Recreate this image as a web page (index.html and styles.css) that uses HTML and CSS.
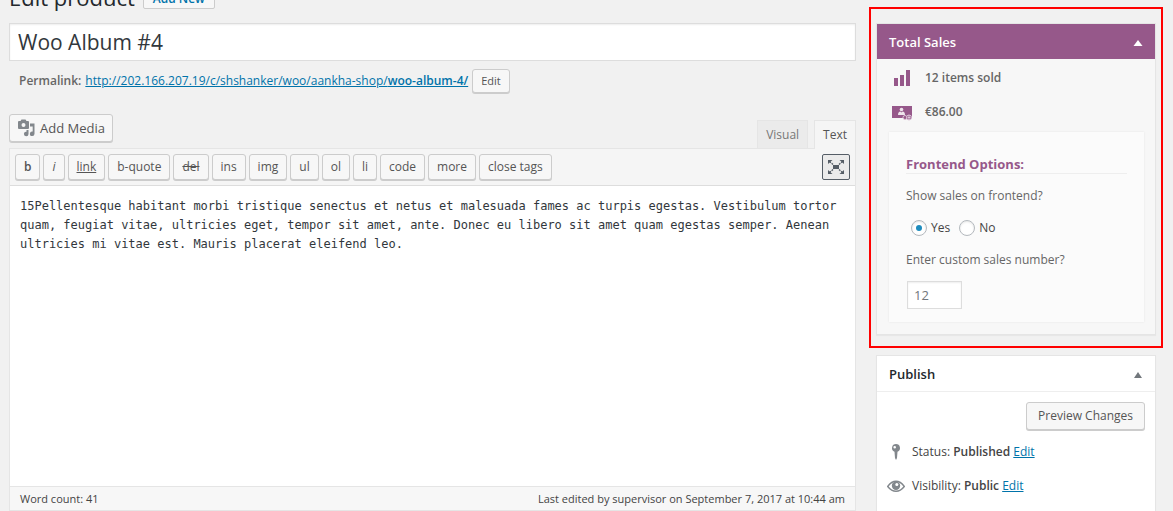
FILE: index.html
```html
<!DOCTYPE html>
<html lang="en">
<head>
<meta charset="utf-8">
<title>Edit product</title>
<link rel="stylesheet" href="styles.css">
</head>
<body>
<div class="page">
  <main class="content">
    <header class="page-head">
      <h1>Edit product</h1>
      <a class="add-new" href="#">Add New</a>
    </header>
    <input class="title-input" type="text" aria-label="Product name" value="Woo Album #4">
    <div class="permalink">
      <strong>Permalink:</strong>
      <a href="#">http://202.166.207.19/c/shshanker/woo/aankha-shop/<b>woo-album-4/</b></a>
      <button class="btn btn-small" type="button">Edit</button>
    </div>
    <div class="editor-tools">
      <button class="btn media-btn" type="button">
        <svg class="media-icon" width="18" height="18" viewBox="0 0 18 18" aria-hidden="true">
          <path fill="#82878c" fill-rule="evenodd" d="M2 2h1.500L4.500.500h4L9.500 2H11q1 0 1 1v6q0 1-1 1H2Q1 10 1 9V3q0-1 1-1zm4.500 1.900a2 2 0 1 0 0 4 2 2 0 0 0 0-4z"/>
          <path fill="#82878c" d="M13 4.500h4.500v10.200a2.300 2.300 0 1 1-1.800-2.200V7.500H13zM9.500 11h2v4a2.300 2.300 0 1 1-2-2.300z"/>
        </svg>
        Add Media
      </button>
      <div class="tabs">
        <button class="tab" type="button">Visual</button>
        <button class="tab tab-active" type="button">Text</button>
      </div>
    </div>
    <section class="editor">
      <div class="toolbar">
        <button class="btn tag" type="button"><b>b</b></button>
        <button class="btn tag" type="button"><i>i</i></button>
        <button class="btn tag" type="button"><u>link</u></button>
        <button class="btn tag" type="button">b-quote</button>
        <button class="btn tag" type="button"><del>del</del></button>
        <button class="btn tag" type="button">ins</button>
        <button class="btn tag" type="button">img</button>
        <button class="btn tag" type="button">ul</button>
        <button class="btn tag" type="button">ol</button>
        <button class="btn tag" type="button">li</button>
        <button class="btn tag" type="button">code</button>
        <button class="btn tag" type="button">more</button>
        <button class="btn tag" type="button">close tags</button>
        <button class="fullscreen" type="button" aria-label="Distraction-free writing mode">
          <svg width="18" height="16" viewBox="0 0 18 16" aria-hidden="true">
            <path fill="#555d66" d="M6 6h6v4H6zM1 1h4.500L1 5zM17 1h-4.500L17 5zM1 15h4.500L1 11zM17 15h-4.500l4.500-4z"/>
            <path stroke="#555d66" stroke-width="1.300" stroke-dasharray="2.500 1" d="M2 2l4 3.500M16 2l-4 3.500M2 14l4-3.500M16 14l-4-3.500"/>
          </svg>
        </button>
      </div>
      <textarea class="source" aria-label="Product description">15Pellentesque habitant morbi tristique senectus et netus et malesuada fames ac turpis egestas. Vestibulum tortor quam, feugiat vitae, ultricies eget, tempor sit amet, ante. Donec eu libero sit amet quam egestas semper. Aenean ultricies mi vitae est. Mauris placerat eleifend leo.</textarea>
      <div class="status-bar">
        <span>Word count: 41</span>
        <span>Last edited by supervisor on September 7, 2017 at 10:44 am</span>
      </div>
    </section>
  </main>

  <aside class="sidebar">
    <div class="highlight">
      <section class="box sales">
        <div class="box-head sales-head">
          <h2>Total Sales</h2>
          <button class="toggle" type="button" aria-label="Toggle Total Sales"><svg width="10" height="6" viewBox="0 0 10 6" aria-hidden="true"><path d="M5 0l4.500 6h-9z" fill="currentColor"/></svg></button>
        </div>
        <div class="sales-body">
          <p class="stat">
            <svg width="20" height="18" viewBox="0 0 20 18" aria-hidden="true"><path fill="#96588a" d="M2 9h4v8H2zM8 6h4v11H8zM14 1h4v16h-4z"/></svg>
            12 items sold
          </p>
          <p class="stat">
            <svg width="20" height="18" viewBox="0 0 20 18" aria-hidden="true">
              <path fill="#96588a" d="M0 3h20v12H0z"/>
              <circle cx="9.500" cy="6.500" r="1.800" fill="#eee4ec"/>
              <path fill="#eee4ec" d="M6 12q0-3.500 2.500-3.500l1 1 1-1Q13 8.500 13 12z"/>
              <g fill="#96588a" stroke="#dcc5d8" stroke-width="1"><circle cx="13" cy="14.500" r="2"/><circle cx="17" cy="14.500" r="2.500"/></g>
              <path d="M17 12v5M15.500 14.500h3" stroke="#dcc5d8"/>
            </svg>
            €86.00
          </p>
          <div class="options">
            <h3>Frontend Options:</h3>
            <p id="show-label">Show sales on frontend?</p>
            <div class="radios" role="radiogroup" aria-labelledby="show-label">
              <label><input type="radio" name="show" checked>Yes</label>
              <label><input type="radio" name="show">No</label>
            </div>
            <label class="number-label" for="custom">Enter custom sales number?</label>
            <input class="number" id="custom" type="text" value="12">
          </div>
        </div>
      </section>
    </div>
    <section class="box publish">
      <div class="box-head">
        <h2>Publish</h2>
        <button class="toggle" type="button" aria-label="Toggle Publish"><svg width="10" height="6" viewBox="0 0 10 6" aria-hidden="true"><path d="M5 0l4 6H1z" fill="currentColor"/></svg></button>
      </div>
      <div class="publish-body">
        <button class="btn preview" type="button">Preview Changes</button>
        <p class="meta">
          <svg width="18" height="18" viewBox="0 0 18 18" aria-hidden="true"><path fill="#82878c" fill-rule="evenodd" d="M9 1a4 4 0 0 1 1.500 7.700L10 15l-1 2-1-2-.500-6.300A4 4 0 0 1 9 1zM7.700 3a1.300 1.300 0 1 0 0 2.600 1.300 1.300 0 0 0 0-2.600z"/></svg>
          <span>Status: <b>Published</b> <a href="#">Edit</a></span>
        </p>
        <p class="meta">
          <svg width="18" height="18" viewBox="0 0 18 18" aria-hidden="true">
            <path fill="none" stroke="#82878c" stroke-width="1.400" d="M.700 9.500Q4.500 4.300 9 4.300t8.300 5.200Q13.500 14.300 9 14.300T.700 9.500z"/>
            <circle cx="9" cy="8.800" r="4.200" fill="#82878c"/><circle cx="9.800" cy="7.500" r="1.500" fill="#fff"/>
          </svg>
          <span>Visibility: <b>Public</b> <a href="#">Edit</a></span>
        </p>
        <p class="meta">
          <svg width="18" height="18" viewBox="0 0 18 18" aria-hidden="true"><path fill="#82878c" d="M4 0h2v2h6V0h2v2h2v15H2V2h2zM4 7v8h10V7z"/></svg>
        </p>
      </div>
    </section>
  </aside>
</div>
</body>
</html>
```
FILE: styles.css
```css
* { box-sizing: border-box; }

body {
  margin: 0;
  height: 100vh;
  overflow: hidden;
  background: #f1f1f1;
  color: #444;
  font: 12px/18px "Open Sans", "Noto Sans", sans-serif;
}

h1, h2, h3, p { margin: 0; }
b, strong { font-weight: 600; }
a { color: #0073aa; }
button, input, textarea { font: inherit; color: inherit; margin: 0; }
svg { display: block; flex: none; }

.page {
  display: grid;
  grid-template-columns: minmax(0, 1fr) 294px;
  gap: 13px;
  padding: 0 10px 0 9px;
}

.btn {
  padding: 0 8px;
  border: 1px solid #ccc;
  border-radius: 3px;
  background: #f7f7f7;
  box-shadow: 0 1px 0 #ccc;
  color: #555;
  white-space: nowrap;
}

/* Page heading, scrolled partly out of view */
.page-head {
  display: flex;
  align-items: flex-end;
  gap: 8px;
  height: 30px;
  margin-top: -21px;
}
.page-head h1 {
  color: #23282d;
  font-size: 22px;
  font-weight: 400;
  line-height: 24px;
}
.add-new {
  padding: 5px 9px 0;
  border: 1px solid #ccc;
  border-radius: 2px;
  background: #f7f7f7;
  font-weight: 600;
  text-decoration: none;
}

.title-input {
  display: block;
  width: 100%;
  height: 38px;
  margin-top: 14px;
  padding: 0 8px;
  border: 1px solid #ddd;
  background: #fff;
  box-shadow: inset 0 1px 2px rgba(0, 0, 0, .07);
  color: #32373c;
  font-size: 21px;
}

.permalink {
  display: flex;
  align-items: center;
  gap: 4px;
  margin-top: 8px;
  padding-left: 10px;
  color: #666;
}
.btn-small { height: 24px; font-size: 11px; }

.editor-tools {
  display: flex;
  justify-content: space-between;
  align-items: flex-start;
  margin-top: 21px;
}
.media-btn {
  display: flex;
  align-items: center;
  gap: 5px;
  height: 28px;
  padding: 0 7px;
  font-size: 13px;
}
.tabs { display: flex; gap: 6px; padding-top: 6px; }
.tab {
  height: 28px;
  padding: 0 8px;
  border: 1px solid #e5e5e5;
  border-bottom: 0;
  background: #ebebeb;
  color: #777;
}
.tab-active {
  position: relative;
  height: 29px;
  margin-bottom: -1px;
  background: #f5f5f5;
  color: #555;
}

.editor { border: 1px solid #e5e5e5; }
.toolbar {
  display: flex;
  gap: 3px;
  padding: 5px;
  border-bottom: 1px solid #ddd;
  background: #f5f5f5;
}
.tag { height: 26px; }
.fullscreen {
  display: grid;
  place-items: center;
  width: 28px;
  height: 26px;
  margin-left: auto;
  padding: 0;
  border: 1px solid #555d66;
  border-radius: 2px;
  background: #ebebeb;
}
.source {
  display: block;
  width: 100%;
  height: 300px;
  padding: 11px 10px;
  border: 0;
  outline: 0;
  resize: none;
  background: #fff;
  color: #32373c;
  font: 12px/19px "DejaVu Sans Mono", "Liberation Mono", monospace;
}
.status-bar {
  display: flex;
  justify-content: space-between;
  padding: 3px 10px 2px;
  border-top: 1px solid #e5e5e5;
  background: #f7f7f7;
  font-size: 11px;
}

.highlight {
  margin-top: 7px;
  padding: 14px 5px 11px;
  border: 2px solid #f00;
}
.box {
  border: 1px solid #e5e5e5;
  background: #fff;
  box-shadow: 0 1px 1px rgba(0, 0, 0, .04);
}
.box-head {
  display: flex;
  align-items: center;
  justify-content: space-between;
  height: 36px;
  padding: 0 12px;
  border-bottom: 1px solid #eee;
  color: #23282d;
}
.box-head h2 { font-size: 13px; font-weight: 600; }
.toggle {
  padding: 4px 0 2px;
  border: 0;
  background: none;
  color: #72777c;
}

.sales { background: #f7f7f7; }
.sales-head { height: 35px; border-bottom: 0; background: #96588a; color: #fff; }
.sales-head .toggle { color: #fff; }
.sales-body { padding: 2px 11px 12px 12px; }
.stat {
  display: flex;
  align-items: center;
  gap: 13px;
  height: 34px;
  padding-left: 3px;
  color: #666;
  font-weight: 600;
}
.options {
  margin-top: 3px;
  padding: 23px 17px 13px;
  background: #fbfbfb;
  box-shadow: 0 0 2px rgba(0, 0, 0, .08);
  color: #666;
}
.options h3 {
  border-bottom: 1px solid #eee;
  color: #96588a;
  font-size: 13px;
  font-weight: 700;
}
.options p { margin-top: 13px; }
.radios {
  display: flex;
  gap: 9px;
  margin-top: 14px;
  padding-left: 5px;
  color: #444;
}
.radios label { display: flex; align-items: center; gap: 4px; }
.radios input {
  appearance: none;
  display: grid;
  place-items: center;
  width: 16px;
  height: 16px;
  border: 1px solid #b4b9be;
  border-radius: 50%;
  background: #fff;
  box-shadow: inset 0 1px 2px rgba(0, 0, 0, .1);
}
.radios input:checked::before {
  content: "";
  width: 6px;
  height: 6px;
  border-radius: 50%;
  background: #1e8cbe;
}
.number-label { display: block; margin-top: 14px; }
.number {
  display: block;
  width: 55px;
  height: 28px;
  margin: 12px 0 0 1px;
  padding: 0 6px;
  border: 1px solid #ddd;
  background: #fff;
  box-shadow: inset 0 1px 2px rgba(0, 0, 0, .07);
  color: #72777c;
  font-size: 13px;
}

.publish { margin: 7px 7px 0; }
.publish-body { padding: 10px; }
.preview { display: block; height: 28px; margin-left: auto; padding: 0 11px; }
.meta {
  display: flex;
  align-items: center;
  gap: 7px;
  margin-top: 13px;
}
.meta + .meta { margin-top: 16px; }
```
